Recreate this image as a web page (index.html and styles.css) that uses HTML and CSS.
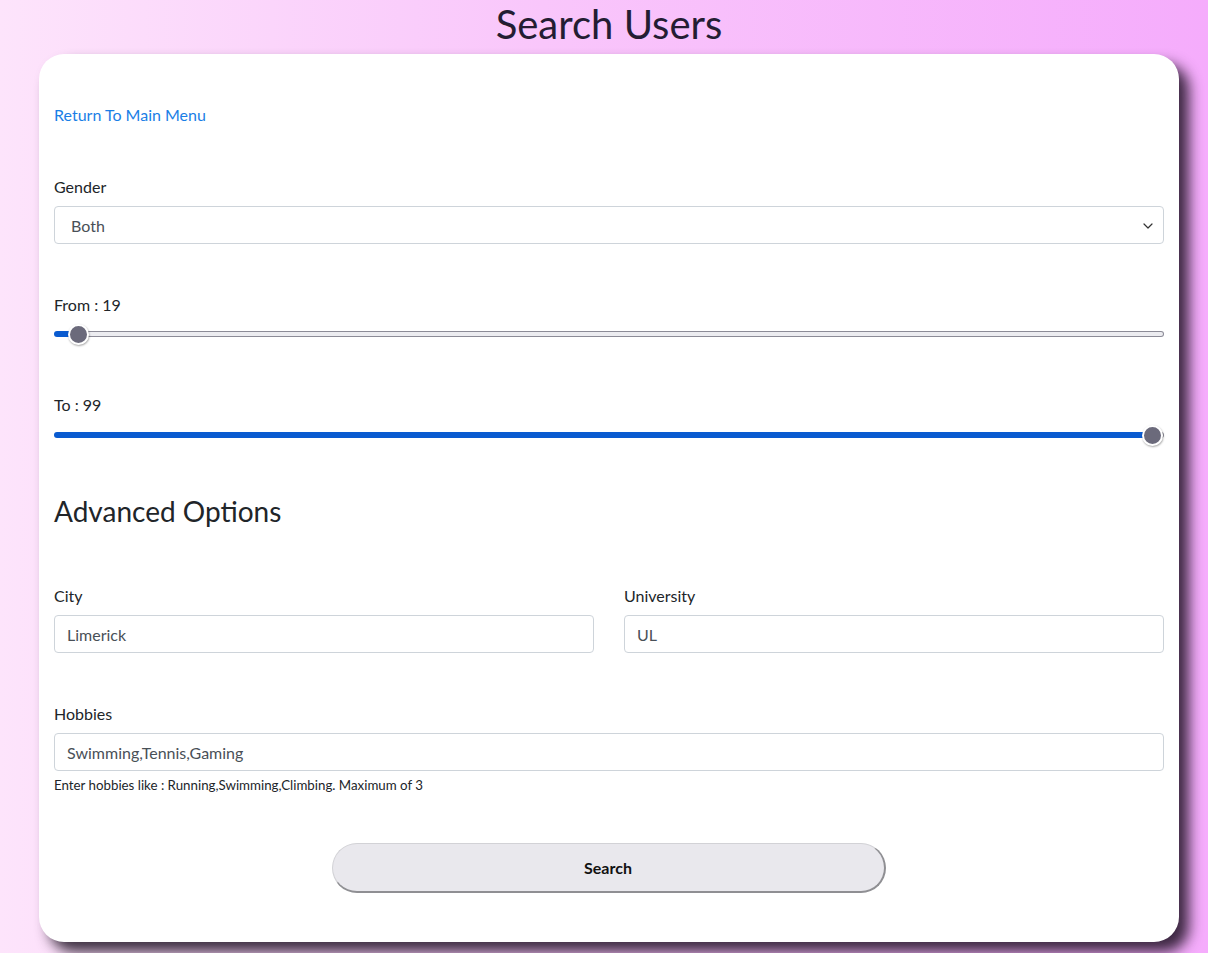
FILE: index.html
```html
<!DOCTYPE html>
<html lang="en">
<head>
<meta charset="utf-8">
<title>Search Users</title>
<link rel="stylesheet" href="styles.css">
</head>
<body>
  <div class="page">
    <h1 class="page-title">Search Users</h1>
    <main class="card">
      <a class="back-link" href="#">Return To Main Menu</a>

      <div class="field field-gender">
        <label class="field-label" for="gender">Gender</label>
        <div class="select-wrap">
          <select id="gender" class="control control-select">
            <option>Both</option>
            <option>Male</option>
            <option>Female</option>
          </select>
          <svg class="select-chevron" width="10" height="6" viewBox="0 0 10 6" aria-hidden="true">
            <path d="M1 1l4 4 4-4" fill="none" stroke="#333" stroke-width="1.2" stroke-linecap="round" stroke-linejoin="round"/>
          </svg>
        </div>
      </div>

      <div class="field field-range field-from">
        <label class="field-label range-label" for="from">From : 19</label>
        <input id="from" class="range" type="range" min="18" max="99" value="19" style="--p: 0.0123">
      </div>

      <div class="field field-range field-to">
        <label class="field-label range-label" for="to">To : 99</label>
        <input id="to" class="range" type="range" min="18" max="99" value="99" style="--p: 1">
      </div>

      <h3 class="section-title">Advanced Options</h3>

      <div class="row-2">
        <div class="field">
          <label class="field-label" for="city">City</label>
          <input id="city" class="control" type="text" value="Limerick">
        </div>
        <div class="field">
          <label class="field-label" for="uni">University</label>
          <input id="uni" class="control" type="text" value="UL">
        </div>
      </div>

      <div class="field field-hobbies">
        <label class="field-label" for="hobbies">Hobbies</label>
        <input id="hobbies" class="control" type="text" value="Swimming,Tennis,Gaming">
        <small class="help-text">Enter hobbies like : Running,Swimming,Climbing. Maximum of 3</small>
      </div>

      <div class="actions">
        <button class="search-btn" type="button">Search</button>
      </div>
    </main>
  </div>
</body>
</html>
```
FILE: styles.css
```css
* { box-sizing: border-box; }

html, body { height: 100%; }

body {
  margin: 0;
  font-family: "Lato", "Open Sans", sans-serif;
  font-size: 16px;
  line-height: 1.5;
  color: #212529;
  background: linear-gradient(to right, #fde4fb 0%, #f9c6fb 45%, #f5acfc 100%);
  overflow: hidden;
}

.page {
  width: 1140px;
  margin-left: 39px;
}

.page-title {
  margin: 0;
  font-size: 40px;
  font-weight: 400;
  line-height: 48px;
  text-align: center;
  color: #241d33;
}

.card {
  display: block;
  margin-top: 6px;
  padding: 49px 15px 49px;
  background: #fff;
  border-radius: 25px;
  box-shadow: 10px 10px 14px rgba(20, 10, 25, 0.82);
}

.back-link {
  display: block;
  width: max-content;
  color: #1a7ee6;
  text-decoration: none;
  line-height: 24px;
}

.field-label {
  display: block;
  line-height: 24px;
  margin-bottom: 7px;
}

.field-gender { margin-top: 48px; }

.select-wrap { position: relative; }

.control {
  display: block;
  width: 100%;
  height: 38px;
  padding: 6px 12px;
  font-family: inherit;
  font-size: 16px;
  line-height: 24px;
  color: #495057;
  background: #fff;
  border: 1px solid #ced4da;
  border-radius: 4px;
  outline: none;
}

.control-select {
  -webkit-appearance: none;
  appearance: none;
  padding-left: 16px;
  padding-top: 7px;
  padding-bottom: 5px;
}

.select-chevron {
  position: absolute;
  right: 11px;
  top: 17px;
  pointer-events: none;
}

.field-from { margin-top: 49px; }
.field-to { margin-top: 49px; }

.field-from .range-label { margin-bottom: 7px; }
.field-to .range-label { margin-bottom: 8px; }

.range {
  -webkit-appearance: none;
  appearance: none;
  display: block;
  width: 100%;
  height: 20px;
  margin: 0;
  background: transparent;
  outline: none;
}

.range::-webkit-slider-runnable-track {
  box-sizing: border-box;
  height: 6px;
  border: 1px solid transparent;
  border-radius: 3px;
  background:
    linear-gradient(to right, #0a5bd0 calc(10px + (100% - 20px) * var(--p)), transparent 0) border-box,
    linear-gradient(#ececf0, #ececf0) padding-box,
    #8c8b97;
}

.range::-webkit-slider-thumb {
  -webkit-appearance: none;
  appearance: none;
  width: 21px;
  height: 21px;
  margin-top: -8.5px;
  border-radius: 50%;
  background: #6b6a7b;
  border: 2px solid #fff;
  box-shadow: 0.5px 1px 2px rgba(0, 0, 0, 0.35);
}

.section-title {
  margin: 49px 0 0;
  font-size: 28px;
  font-weight: 400;
  line-height: 34px;
  color: #212529;
}

.row-2 {
  display: grid;
  grid-template-columns: 1fr 1fr;
  column-gap: 30px;
  margin-top: 56px;
}

.field-hobbies { margin-top: 49px; }

.help-text {
  display: block;
  margin-top: 4px;
  font-size: 13.3px;
  line-height: 20px;
  color: #212529;
}

.actions {
  display: flex;
  justify-content: center;
  margin-top: 48px;
}

.search-btn {
  width: 554px;
  height: 50px;
  margin-left: -1px;
  font-family: inherit;
  font-size: 16px;
  font-weight: 700;
  color: #111;
  background: #e9e8ed;
  border-style: solid;
  border-width: 1px 2px 2px 1px;
  border-color: #d2d2d6 #8f8f93 #8f8f93 #d2d2d6;
  border-radius: 25px;
  cursor: pointer;
}
```
